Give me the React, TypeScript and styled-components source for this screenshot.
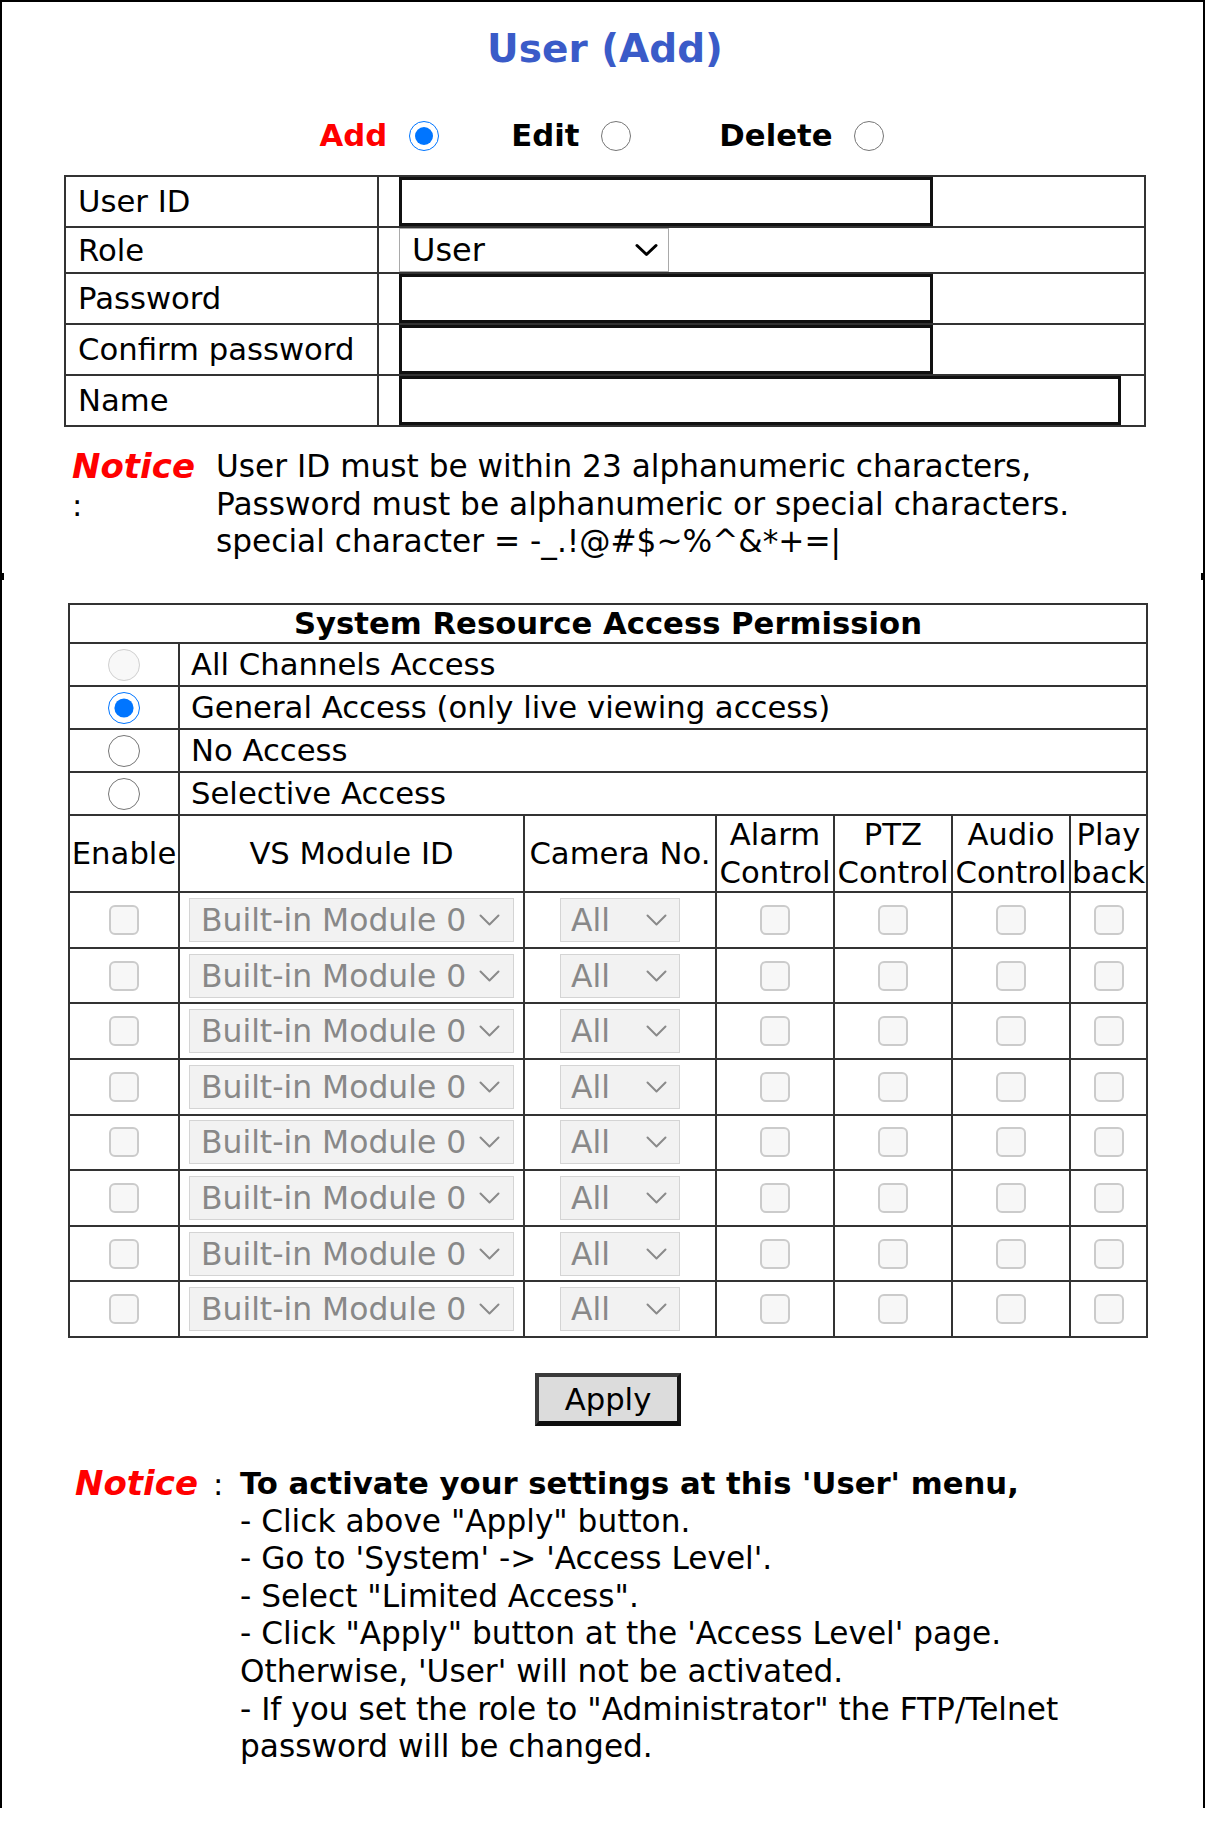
import React from "react";
import styled, { createGlobalStyle } from "styled-components";

const BODY = "30.7px";
const NOTE = "31.2px";

const GlobalStyle = createGlobalStyle`
  html, body { margin: 0; padding: 0; background: #ffffff; }
  body {
    font-family: "DejaVu Sans", Verdana, "Liberation Sans", sans-serif;
    color: #000;
  }
  *, *::before, *::after { box-sizing: border-box; }
`;

const Page = styled.div`
  position: relative;
  width: 1205px;
  height: 1808px;
  border: 2px solid #000;
  border-bottom: none;
  padding-left: 62px;
  display: flex;
  flex-direction: column;
  align-items: flex-start;
`;

const Title = styled.h1`
  margin: 22px 0 0;
  width: 1082px;
  font-size: 39px;
  line-height: 50px;
  font-weight: bold;
  color: #3a5bc8;
  text-align: center;
`;

const ModeRow = styled.div`
  margin-top: 42px;
  width: 1082px;
  height: 40px;
  padding-right: 6px;
  display: flex;
  justify-content: center;
  align-items: center;
`;

const ModeOption = styled.label<{ $gap?: number }>`
  display: flex;
  align-items: center;
  gap: 22px;
  margin-left: ${(p) => p.$gap ?? 0}px;
  font-size: ${BODY};
  font-weight: bold;
  line-height: 40px;
`;

const ModeText = styled.span<{ $active?: boolean }>`
  color: ${(p) => (p.$active ? "#ff0000" : "#000")};
`;

const Radio = styled.input.attrs({ type: "radio" })<{ $size: number }>`
  width: ${(p) => p.$size}px;
  height: ${(p) => p.$size}px;
  margin: 0;
  flex: none;
`;

const FormTable = styled.div`
  margin-top: 19px;
  width: 1082px;
  border: 2px solid #333;
`;

const FormRow = styled.div<{ $h: number; $last?: boolean }>`
  display: grid;
  grid-template-columns: 313px 1fr;
  height: ${(p) => p.$h}px;
  border-bottom: ${(p) => (p.$last ? "none" : "2px solid #333")};
`;

const FormLabel = styled.div`
  display: flex;
  align-items: center;
  padding-left: 12px;
  border-right: 2px solid #333;
  font-size: ${BODY};
  white-space: nowrap;
`;

const FormField = styled.div`
  display: flex;
  align-items: stretch;
  padding-left: 20px;
`;

const TextBox = styled.input<{ $w: number }>`
  width: ${(p) => p.$w}px;
  height: 100%;
  margin: 0;
  padding: 0 8px;
  border: 3px solid #111;
  background: #fff;
  font-family: inherit;
  font-size: ${BODY};
`;

const SelectWrap = styled.div<{ $w: number; $h: number }>`
  position: relative;
  width: ${(p) => p.$w}px;
  height: ${(p) => p.$h}px;
  flex: none;
`;

const Select = styled.select<{ $pad: number; $muted?: boolean; $size: string }>`
  appearance: none;
  -webkit-appearance: none;
  width: 100%;
  height: 100%;
  margin: 0;
  padding: 0 0 0 ${(p) => p.$pad}px;
  border-radius: 0;
  font-family: inherit;
  font-size: ${(p) => p.$size};
  color: ${(p) => (p.$muted ? "#888888" : "#000")};
  background: ${(p) => (p.$muted ? "#f2f2f2" : "#fff")};
  border: 1px solid ${(p) => (p.$muted ? "#d4d4d4" : "#a9a9a9")};
  opacity: 1;
`;

const ChevronSvg = styled.svg<{ $right: number }>`
  position: absolute;
  right: ${(p) => p.$right}px;
  top: 50%;
  transform: translateY(-50%);
  pointer-events: none;
`;

function Chevron({
  w,
  h,
  stroke,
  color,
  right,
}: {
  w: number;
  h: number;
  stroke: number;
  color: string;
  right: number;
}) {
  const s = stroke / 2 + 0.5;
  return (
    <ChevronSvg $right={right} width={w} height={h} viewBox={`0 0 ${w} ${h}`}>
      <polyline
        points={`${s},${s} ${w / 2},${h - s} ${w - s},${s}`}
        fill="none"
        stroke={color}
        strokeWidth={stroke}
        strokeLinecap="round"
        strokeLinejoin="round"
      />
    </ChevronSvg>
  );
}

const Notice = styled.div<{ $label: number; $mt: number }>`
  margin-top: ${(p) => p.$mt}px;
  display: grid;
  grid-template-columns: ${(p) => p.$label}px auto;
  font-size: ${NOTE};
  line-height: 37.6px;
`;

const NoticeLabel = styled.div<{ $pad: number }>`
  padding-left: ${(p) => p.$pad}px;
  white-space: nowrap;
`;

const NoticeWord = styled.span`
  color: #ff0000;
  font-weight: bold;
  font-style: italic;
  font-size: 34px;
`;

const Colon = styled.span<{ $stack?: boolean; $gap?: number }>`
  display: ${(p) => (p.$stack ? "block" : "inline")};
  margin-left: ${(p) => p.$gap ?? 0}px;
  font-size: ${BODY};
`;

const NoticeLines = styled.div`
  white-space: nowrap;
`;

const NoticeLine = styled.div<{ $strong?: boolean }>`
  font-weight: ${(p) => (p.$strong ? "bold" : "normal")};
  font-size: ${(p) => (p.$strong ? BODY : NOTE)};
`;

const Seam = styled.div`
  position: relative;
  align-self: stretch;
  margin-left: -62px;
  margin-top: 15.5px;
  height: 0;
  &::before,
  &::after {
    content: "";
    position: absolute;
    top: -3px;
    width: 2px;
    height: 7px;
    background: #000;
  }
  &::before { left: 0; }
  &::after { right: 0; }
`;

const PermGrid = styled.div`
  margin-top: 27px;
  margin-left: 4px;
  display: grid;
  grid-template-columns: 108px 343px 190px 116px 116px 116px 75px;
  grid-template-rows: 37px repeat(4, 41px) 75px repeat(8, 53.6px);
  gap: 2px;
  padding: 2px;
  background: #333;
  font-size: ${BODY};
  line-height: 37.5px;
`;

const Cell = styled.div<{ $span?: number; $left?: boolean; $bold?: boolean }>`
  grid-column: span ${(p) => p.$span ?? 1};
  background: #fff;
  display: flex;
  align-items: center;
  justify-content: ${(p) => (p.$left ? "flex-start" : "center")};
  padding-left: ${(p) => (p.$left ? 11 : 0)}px;
  font-weight: ${(p) => (p.$bold ? "bold" : "normal")};
  text-align: center;
  white-space: nowrap;
  overflow: hidden;
`;

const Check = styled.input.attrs({ type: "checkbox" })`
  appearance: none;
  -webkit-appearance: none;
  width: 30px;
  height: 30px;
  margin: 0;
  border: 2px solid #cbcbcb;
  border-radius: 6px;
  background: #f7f7f7;
`;

const ApplyRow = styled.div`
  margin-top: 35px;
  margin-left: 4px;
  width: 1080px;
  display: flex;
  justify-content: center;
`;

const ApplyButton = styled.button`
  width: 146px;
  height: 53px;
  padding: 0;
  font-family: inherit;
  font-size: ${BODY};
  color: #000;
  background: #dcdcdc;
  border-style: solid;
  border-width: 4px 4px 5px 4px;
  border-color: #3a3a3a #151515 #0d0d0d #3a3a3a;
  border-radius: 0;
`;

const accessOptions = [
  { label: "All Channels Access", disabled: true, checked: false },
  { label: "General Access (only live viewing access)", disabled: false, checked: true },
  { label: "No Access", disabled: false, checked: false },
  { label: "Selective Access", disabled: false, checked: false },
];

const columnHeads: React.ReactNode[] = [
  "Enable",
  "VS Module ID",
  "Camera No.",
  <>Alarm<br />Control</>,
  <>PTZ<br />Control</>,
  <>Audio<br />Control</>,
  <>Play<br />back</>,
];

const moduleRows = Array.from({ length: 8 }, (_, i) => i);

const formRows = [
  { label: "User ID", h: 51, width: 534 },
  { label: "Role", h: 46, width: 0 },
  { label: "Password", h: 51, width: 534 },
  { label: "Confirm password", h: 51, width: 534 },
  { label: "Name", h: 49, width: 722 },
];

export default function App() {
  return (
    <>
      <GlobalStyle />
      <Page>
        <Title>User (Add)</Title>

        <ModeRow>
          <ModeOption>
            <ModeText $active>Add</ModeText>
            <Radio name="mode" $size={30} defaultChecked />
          </ModeOption>
          <ModeOption $gap={72}>
            <ModeText>Edit</ModeText>
            <Radio name="mode" $size={30} />
          </ModeOption>
          <ModeOption $gap={88}>
            <ModeText>Delete</ModeText>
            <Radio name="mode" $size={30} />
          </ModeOption>
        </ModeRow>

        <FormTable>
          {formRows.map((r, i) => (
            <FormRow key={r.label} $h={r.h} $last={i === formRows.length - 1}>
              <FormLabel>{r.label}</FormLabel>
              <FormField>
                {r.width ? (
                  <TextBox $w={r.width} type={r.label.includes("assword") ? "password" : "text"} />
                ) : (
                  <SelectWrap $w={270} $h={44}>
                    <Select $pad={12} $size="32px" defaultValue="User">
                      <option>User</option>
                      <option>Administrator</option>
                    </Select>
                    <Chevron w={23} h={13} stroke={3} color="#000" right={11} />
                  </SelectWrap>
                )}
              </FormField>
            </FormRow>
          ))}
        </FormTable>

        <Notice $label={152} $mt={21}>
          <NoticeLabel $pad={8}>
            <NoticeWord>Notice</NoticeWord>
            <Colon $stack>:</Colon>
          </NoticeLabel>
          <NoticeLines>
            <NoticeLine>User ID must be within 23 alphanumeric characters,</NoticeLine>
            <NoticeLine>Password must be alphanumeric or special characters.</NoticeLine>
            <NoticeLine>special character = -_.!@#$~%^&amp;*+=|</NoticeLine>
          </NoticeLines>
        </Notice>

        <Seam />

        <PermGrid>
          <Cell $span={7} $bold>System Resource Access Permission</Cell>
          {accessOptions.map((o) => (
            <React.Fragment key={o.label}>
              <Cell>
                <Radio
                  name="access"
                  $size={32}
                  disabled={o.disabled}
                  defaultChecked={o.checked}
                />
              </Cell>
              <Cell $span={6} $left>{o.label}</Cell>
            </React.Fragment>
          ))}
          {columnHeads.map((c, i) => (
            <Cell key={i}>{c}</Cell>
          ))}
          {moduleRows.map((i) => (
            <React.Fragment key={i}>
              <Cell><Check disabled /></Cell>
              <Cell>
                <SelectWrap $w={325} $h={44}>
                  <Select disabled $muted $pad={11} $size="31.4px" defaultValue="0">
                    <option value="0">Built-in Module 0</option>
                  </Select>
                  <Chevron w={21} h={12} stroke={2} color="#8a8a8a" right={14} />
                </SelectWrap>
              </Cell>
              <Cell>
                <SelectWrap $w={120} $h={44}>
                  <Select disabled $muted $pad={10} $size="31.4px" defaultValue="all">
                    <option value="all">All</option>
                  </Select>
                  <Chevron w={21} h={12} stroke={2} color="#8a8a8a" right={13} />
                </SelectWrap>
              </Cell>
              <Cell><Check disabled /></Cell>
              <Cell><Check disabled /></Cell>
              <Cell><Check disabled /></Cell>
              <Cell><Check disabled /></Cell>
            </React.Fragment>
          ))}
        </PermGrid>

        <ApplyRow>
          <ApplyButton type="button">Apply</ApplyButton>
        </ApplyRow>

        <Notice $label={176} $mt={39}>
          <NoticeLabel $pad={11}>
            <NoticeWord>Notice</NoticeWord>
            <Colon $gap={15}>:</Colon>
          </NoticeLabel>
          <NoticeLines>
            <NoticeLine $strong>To activate your settings at this 'User' menu,</NoticeLine>
            <NoticeLine>- Click above "Apply" button.</NoticeLine>
            <NoticeLine>- Go to 'System' -&gt; 'Access Level'.</NoticeLine>
            <NoticeLine>- Select "Limited Access".</NoticeLine>
            <NoticeLine>- Click "Apply" button at the 'Access Level' page.</NoticeLine>
            <NoticeLine>Otherwise, 'User' will not be activated.</NoticeLine>
            <NoticeLine>- If you set the role to "Administrator" the FTP/Telnet</NoticeLine>
            <NoticeLine>password will be changed.</NoticeLine>
          </NoticeLines>
        </Notice>
      </Page>
    </>
  );
}
